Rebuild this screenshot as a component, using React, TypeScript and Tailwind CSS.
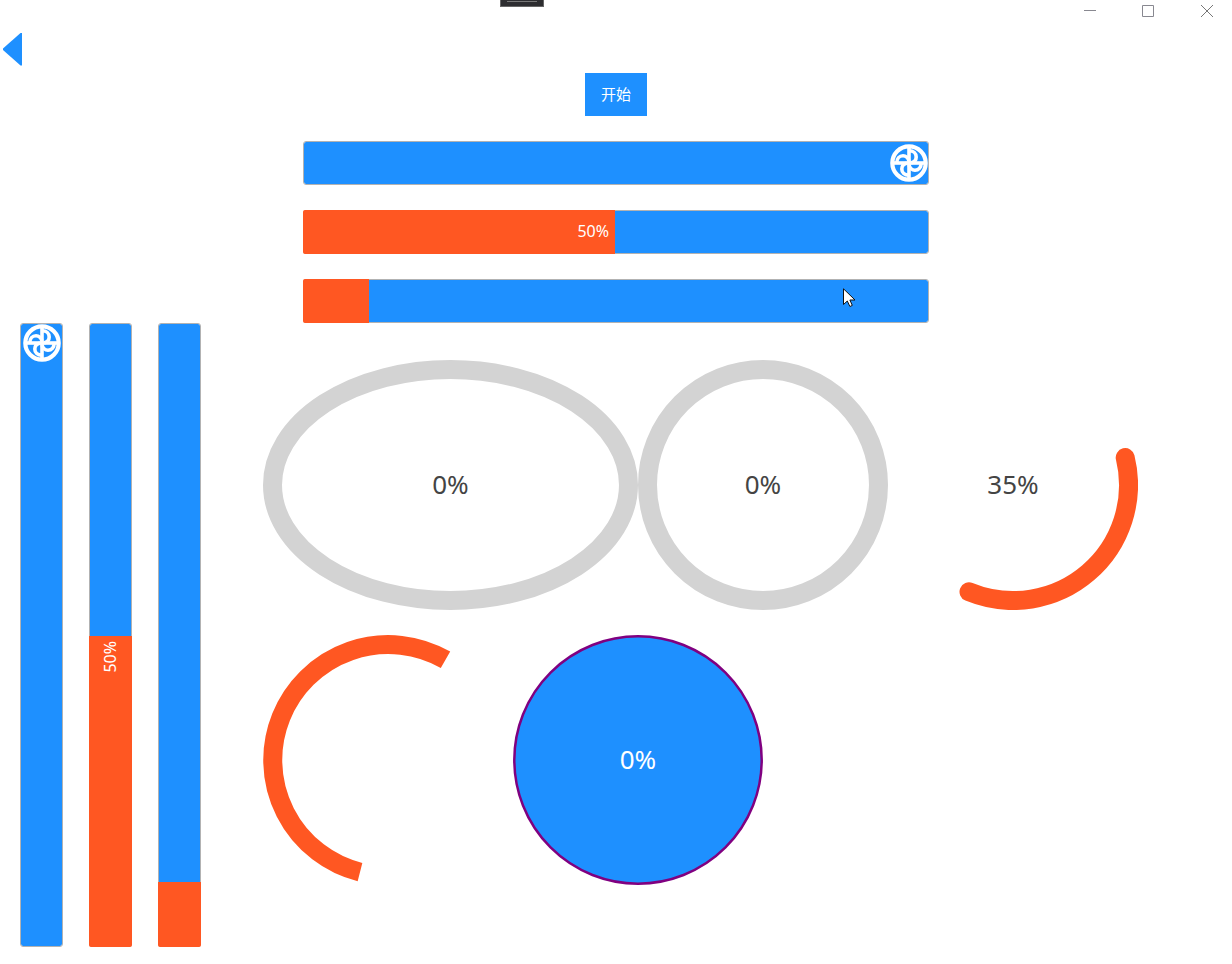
import type { ReactNode } from "react";

function Fan() {
  return (
    <svg viewBox="-19 -19 38 38" className="size-[38px] shrink-0" fill="none" stroke="#fff" aria-hidden="true">
      <circle r="16.700" strokeWidth="4.2" />
      {[0, 90, 180, 270].map((a) => (
        <g key={a} transform={`rotate(${a})`}>
          <path d="M0 0V-15" strokeWidth="3.6" />
          <path d="M0 -12.200C4.500 -12.200 7.200 -9.500 7.200 -6C7.200 -3.500 5.500 -1 2 0" strokeWidth="3.6" />
        </g>
      ))}
    </svg>
  );
}

type BarProps = { value: number; label: string; text?: string; fan?: boolean };

function HorizontalBar({ value, label, text, fan }: BarProps) {
  return (
    <div
      role="progressbar"
      aria-label={label}
      aria-valuenow={value}
      className="flex h-11 w-full rounded-[3px] border border-[#b2b2b2] bg-[#1e90ff] bg-clip-padding"
    >
      {fan ? (
        <div className="flex flex-1 items-center justify-end">
          <Fan />
        </div>
      ) : (
        <div
          className="-my-px -ml-px flex items-center justify-end rounded-l-[2px] bg-[#ff5722] pb-0.5 pr-1.5 text-base text-white"
          style={{ width: `${value}%` }}
        >
          {text}
        </div>
      )}
    </div>
  );
}

function VerticalBar({ value, label, text, fan }: BarProps) {
  return (
    <div
      role="progressbar"
      aria-label={label}
      aria-valuenow={value}
      className="flex h-[624px] w-[43px] flex-col justify-end rounded-[3px] border border-[#b2b2b2] bg-[#1e90ff] bg-clip-padding"
    >
      {fan ? (
        <div className="flex flex-1 items-start justify-center">
          <Fan />
        </div>
      ) : (
        <div
          className="-mx-px -mb-px flex justify-center rounded-b-[2px] bg-[#ff5722] pr-0.5 pt-[5px] text-base text-white"
          style={{ height: `${value}%` }}
        >
          {text && <span className="h-fit rotate-180 [writing-mode:vertical-rl]">{text}</span>}
        </div>
      )}
    </div>
  );
}

function Gauge({ wide, text, light, children }: { wide?: boolean; text?: string; light?: boolean; children: ReactNode }) {
  return (
    <div className={`grid h-[250px] place-items-center ${wide ? "w-[375px]" : "w-[250px]"}`}>
      <svg
        viewBox={wide ? "-187.5 -125 375 250" : "-125 -125 250 250"}
        className="col-start-1 row-start-1 size-full"
        fill="none"
        aria-hidden="true"
      >
        {children}
      </svg>
      <span className={`col-start-1 row-start-1 pb-0.5 text-[26px] ${light ? "text-white" : "text-[#444]"}`}>{text}</span>
    </div>
  );
}

export default function App() {
  return (
    <div className="relative min-h-screen bg-white font-['Noto_Sans','Noto_Sans_CJK_SC',sans-serif]">
      <div className="absolute left-[500px] top-0 h-[7px] w-11 border border-t-0 border-[#666] bg-[#2d2d30] px-1.5">
        <div className="h-0.5 border-b border-[#777]" />
      </div>

      <header className="flex h-[22px] justify-end">
        <button aria-label="Minimize" className="grid w-12 place-items-center">
          <svg width="12" height="22" stroke="#888890" aria-hidden="true">
            <path d="M0 10.5H12" />
          </svg>
        </button>
        <button aria-label="Maximize" className="grid w-[68px] place-items-center">
          <svg width="12" height="22" fill="none" stroke="#888890" aria-hidden="true">
            <path d="M.5 5.5H11.5V16.5H.5Z" />
          </svg>
        </button>
        <button aria-label="Close" className="grid w-[50px] place-items-center">
          <svg width="12" height="22" stroke="#777" aria-hidden="true">
            <path d="M0 5L12 17M12 5L0 17" />
          </svg>
        </button>
      </header>

      <div className="flex h-[51px] items-start pl-[3px] pt-[11px]">
        <button aria-label="Back">
          <svg width="19" height="33" className="block" fill="#1e90ff" aria-hidden="true">
            <path d="M19 0V32.500H17.500L0 17V15.500L17.500 0Z" />
          </svg>
        </button>
      </div>

      <div className="mx-auto flex w-[626px] max-w-full flex-col items-center gap-[25px]">
        <button className="h-[43px] bg-[#1e90ff] px-4 text-[15px] text-white">开始</button>
        <HorizontalBar label="Fan progress" value={100} fan />
        <HorizontalBar label="Half progress" value={50} text="50%" />
        <div className="relative w-full">
          <HorizontalBar label="Short progress" value={10.5} />
          <svg className="absolute left-[540px] top-[9px]" width="13" height="20" fill="#fff" stroke="#111" aria-hidden="true">
            <path d="M.5 .8V16.500L4.300 13L6.900 18.500L9.300 17.400L6.900 12H12Z" />
          </svg>
        </div>
      </div>

      <main className="flex items-start gap-[62px] pb-4 pl-5">
        <div className="flex shrink-0 gap-[26px]">
          <VerticalBar label="Vertical fan progress" value={100} fan />
          <VerticalBar label="Vertical half progress" value={50} text="50%" />
          <VerticalBar label="Vertical short progress" value={10.5} />
        </div>

        <div className="flex flex-1 flex-wrap gap-y-[25px] pt-[37px]">
          <Gauge wide text="0%">
            <ellipse rx="178" ry="115.500" stroke="#d3d3d3" strokeWidth="19" />
          </Gauge>
          <Gauge text="0%">
            <circle r="115.500" stroke="#d3d3d3" strokeWidth="19" />
          </Gauge>
          <Gauge text="35%">
            <path d="M112.200 -27.400A115.500 115.500 0 0 1 -44 106.800" stroke="#ff5722" strokeWidth="19" strokeLinecap="round" />
          </Gauge>
          <Gauge>
            <path d="M-28 112.100A115.500 115.500 0 1 1 57.500 -100.200" stroke="#ff5722" strokeWidth="19" />
          </Gauge>
          <Gauge text="0%" light>
            <circle r="123.700" fill="#1e90ff" stroke="#800080" strokeWidth="2.500" />
          </Gauge>
        </div>
      </main>
    </div>
  );
}
